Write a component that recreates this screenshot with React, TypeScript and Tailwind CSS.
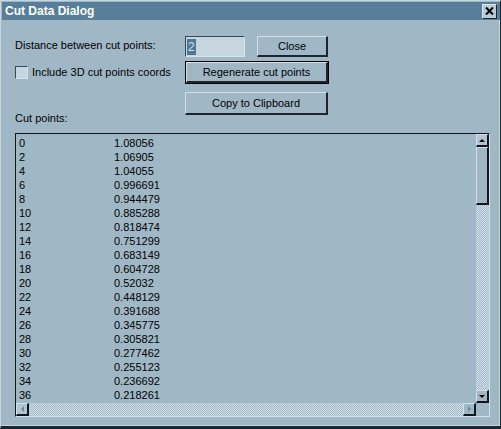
import React from "react";

const rows: [string, string][] = [
  ["0", "1.08056"],
  ["2", "1.06905"],
  ["4", "1.04055"],
  ["6", "0.996691"],
  ["8", "0.944479"],
  ["10", "0.885288"],
  ["12", "0.818474"],
  ["14", "0.751299"],
  ["16", "0.683149"],
  ["18", "0.604728"],
  ["20", "0.52032"],
  ["22", "0.448129"],
  ["24", "0.391688"],
  ["26", "0.345775"],
  ["28", "0.305821"],
  ["30", "0.277462"],
  ["32", "0.255123"],
  ["34", "0.236692"],
  ["36", "0.218261"],
];

const checker =
  "bg-[repeating-conic-gradient(#d2dee5_0_25%,#a3bbc9_0_50%)] bg-[length:2px_2px]";

function Arrow({ dir, color }: { dir: "up" | "down" | "left" | "right"; color: string }) {
  const pts = {
    up: "0,4 6,4 3,1",
    down: "0,1 6,1 3,4",
    left: "4,0 4,6 1,3",
    right: "1,0 1,6 4,3",
  }[dir];
  const vertical = dir === "up" || dir === "down";
  return (
    <svg width={vertical ? 6 : 5} height={vertical ? 5 : 6} viewBox={vertical ? "0 0 6 5" : "0 0 5 6"}>
      <polygon points={pts} fill={color} />
    </svg>
  );
}

function Button({ label, w }: { label: string; w: string }) {
  return (
    <div
      className={`${w} h-full flex items-center justify-center bg-[#a0b8c6] border-t border-l border-[#d4e0e6] border-b-2 border-r-2 border-b-[#1a2630] border-r-[#1a2630]`}
    >
      {label}
    </div>
  );
}

export default function App() {
  return (
    <div
      className="w-[501px] h-[429px] flex flex-col bg-[#a0b8c6] border-t border-l border-[#c8d6de] border-r border-b-[3px] border-r-[#1a2630] border-b-[#1a2630] text-black text-[11px] leading-[13px]"
      style={{ fontFamily: '"Liberation Sans", Arial, sans-serif' }}
    >
      <div className="flex-1 flex flex-col pl-[1px] pt-[1px]">
        {/* Title bar */}
        <div className="h-[18px] bg-[#587f99] flex items-center justify-between">
          <span className="pl-[3px] text-white font-bold text-[12px] leading-[18px]">Cut Data Dialog</span>
          <div className="mr-[3px] w-[15px] h-[15px] flex items-center justify-center bg-[#b8cad4] border-t border-l border-[#dde7ec] border-b border-r border-b-[#1a2630] border-r-[#1a2630]">
            <svg width="9" height="8" viewBox="0 0 9 8">
              <path d="M1 0.5 L8 7.5 M8 0.5 L1 7.5" stroke="#000" strokeWidth="2" />
            </svg>
          </div>
        </div>

        {/* Body */}
        <div className="flex-1 flex flex-col pl-[13px] border-r border-b border-[#c8d6de]">
          {/* Distance row */}
          <div className="mt-[16px] h-[21px] flex items-start">
            <div className="w-[170px] pt-[3px]">Distance between cut points:</div>
            <div className="w-[60px] h-[21px] flex items-center pl-[1px] bg-[#c6d6de] border-t border-l border-[#34485a] border-b border-r border-b-[#d8e3e9] border-r-[#d8e3e9]">
              <span className="bg-[#4f7892] text-[#d6e2e8] text-[12px] leading-[16px] px-[1px]">2</span>
            </div>
            <div className="ml-[12px] h-[21px] flex">
              <Button label="Close" w="w-[71px]" />
            </div>
          </div>

          {/* Include 3D row */}
          <div className="mt-[4px] h-[23px] flex items-start">
            <div className="w-[170px] h-full flex items-center">
              <div className="w-[13px] h-[13px] bg-[#c6d6de] border-t border-l border-[#34485a] border-b border-r border-b-[#d8e3e9] border-r-[#d8e3e9]" />
              <span className="ml-[4px]">Include 3D cut points coords</span>
            </div>
            <div className="h-[23px] border border-black flex">
              <Button label="Regenerate cut points" w="w-[142px]" />
            </div>
          </div>

          {/* Copy row + Cut points label */}
          <div className="mt-[8px] flex items-start">
            <div className="w-[170px] pt-[20px]">Cut points:</div>
            <div className="h-[23px] flex">
              <Button label="Copy to Clipboard" w="w-[143px]" />
            </div>
          </div>

          {/* List box */}
          <div className="mt-[8px] w-[475px] h-[284px] flex flex-col border-t border-l border-[#0f1820] border-b border-r border-b-[#d4e0e6] border-r-[#d4e0e6]">
            <div className="flex-1 flex min-h-0">
              <div className="flex-1 overflow-hidden pt-[2px] pl-[3px] leading-[14px]">
                {rows.map(([a, b]) => (
                  <div key={a} className="flex h-[14px]">
                    <span className="w-[95px]">{a}</span>
                    <span>{b}</span>
                  </div>
                ))}
              </div>
              {/* Vertical scrollbar */}
              <div className="w-[13px] flex flex-col">
                <div className="h-[13px] flex items-center justify-center bg-[#b2c6d2] border-t border-l border-[#d4e0e6] border-b-2 border-r-2 border-b-[#0f1820] border-r-[#0f1820]">
                  <Arrow dir="up" color="#000" />
                </div>
                <div className="h-[58px] bg-[#a0b8c6] border-t border-l border-[#d4e0e6] border-b-2 border-r-2 border-b-[#0f1820] border-r-[#0f1820]" />
                <div className={`flex-1 ${checker}`} />
                <div className="h-[13px] flex items-center justify-center bg-[#a0b8c6] border-t border-l border-[#d4e0e6] border-b-2 border-r-2 border-b-[#0f1820] border-r-[#0f1820]">
                  <Arrow dir="down" color="#000" />
                </div>
              </div>
            </div>
            {/* Horizontal scrollbar */}
            <div className="h-[13px] flex">
              <div className="w-[13px] flex items-center justify-center bg-[#b2c6d2] border-t border-l border-[#d4e0e6] border-b-2 border-r-2 border-b-[#0f1820] border-r-[#0f1820]">
                <Arrow dir="left" color="#6d8898" />
              </div>
              <div className={`flex-1 ${checker}`} />
              <div className="w-[13px] flex items-center justify-center bg-[#a0b8c6] border-t border-l border-[#d4e0e6] border-b-2 border-r-2 border-b-[#0f1820] border-r-[#0f1820]">
                <Arrow dir="right" color="#6d8898" />
              </div>
              <div className="w-[13px] bg-[#a0b8c6]" />
            </div>
          </div>
        </div>
      </div>
    </div>
  );
}
